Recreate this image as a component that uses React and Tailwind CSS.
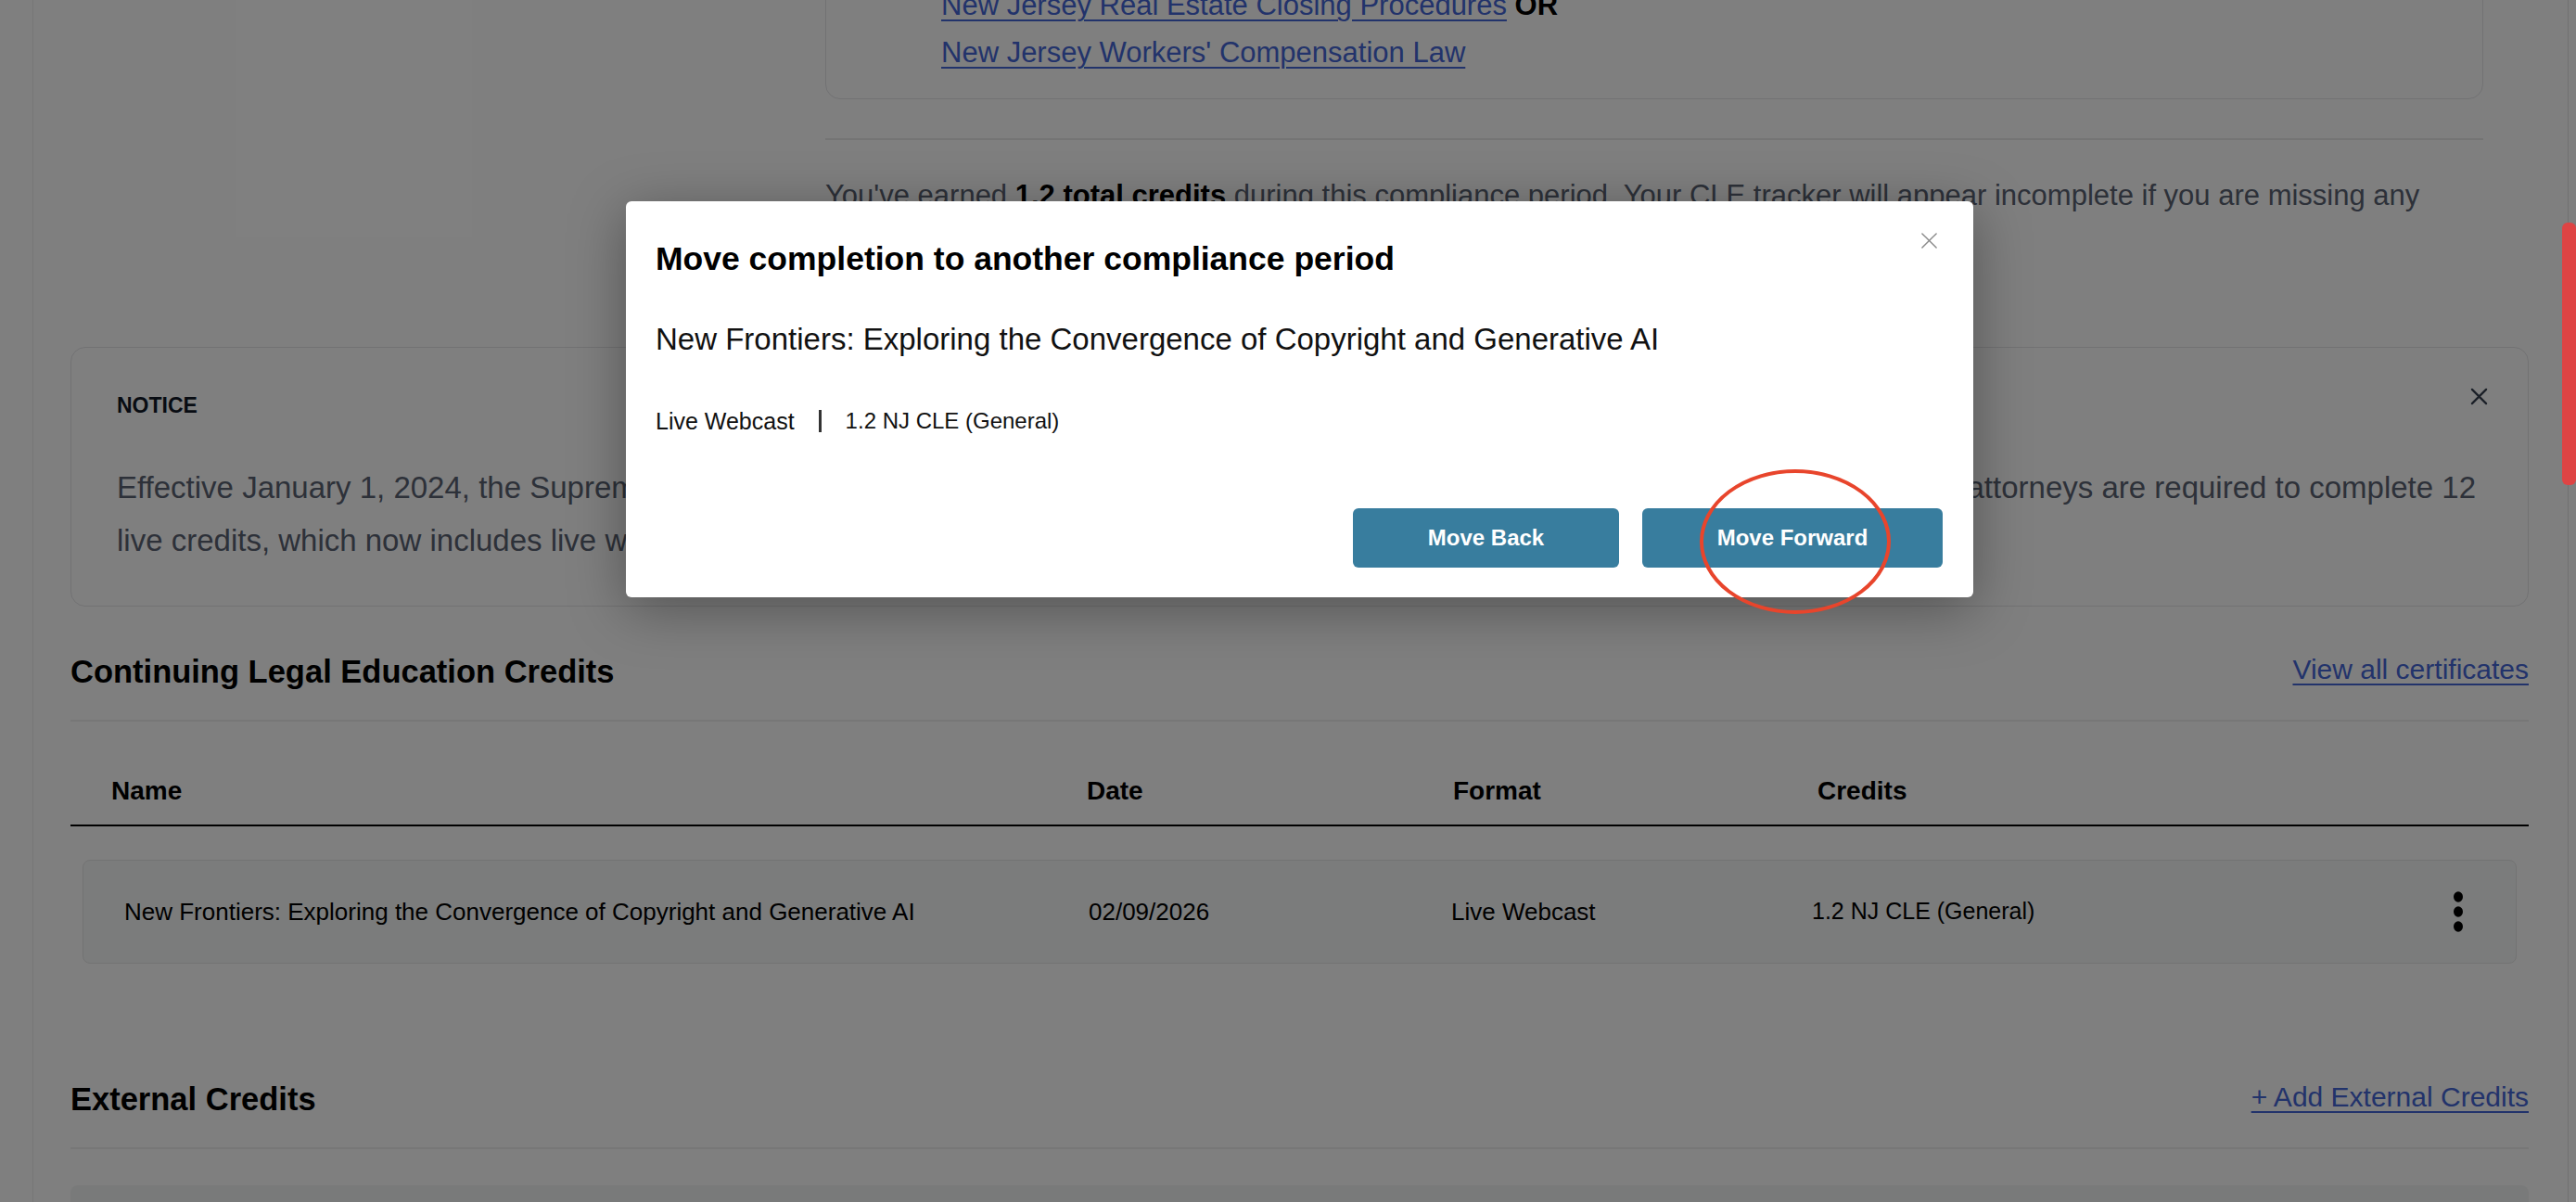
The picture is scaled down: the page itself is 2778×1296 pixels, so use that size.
import React from 'react';

const linkCls = 'text-[#4566d6] underline decoration-2 underline-offset-[5px]';

const XIcon = ({ className, strokeWidth = 2 }) => (
  <svg viewBox="0 0 20 20" className={className} fill="none" stroke="currentColor" strokeWidth={strokeWidth} strokeLinecap="round">
    <path d="M2 2L18 18M18 2L2 18" />
  </svg>
);

const Kebab = () => (
  <svg width="12" height="44" viewBox="0 0 12 44" fill="currentColor">
    <ellipse cx="6" cy="6" rx="5" ry="5.8" />
    <ellipse cx="6" cy="22" rx="5" ry="5.8" />
    <ellipse cx="6" cy="38" rx="5" ry="5.8" />
  </svg>
);

const SectionHead = ({ title, action }) => (
  <>
    <div className="flex items-start justify-between">
      <h2 className="text-[34.5px] leading-[40px] font-bold text-black">{title}</h2>
      <a href="#" className={`text-[30px] leading-[36px] ${linkCls}`}>{action}</a>
    </div>
    <div className="mt-[32px] h-[2px] bg-[#eeeeee]" />
  </>
);

export default function App() {
  return (
    <div className="relative h-[1296px] w-full overflow-hidden bg-white font-['Liberation_Sans',Arial,sans-serif]">
      <div className="flex h-full">
        <aside className="w-[36px] shrink-0 border-r border-[#ececec]" />

        <main className="-mt-[45px] flex-1 pl-[40px] pr-[42px]">
          {/* requirement details */}
          <div className="flex">
            <div className="w-[814px] shrink-0" />
            <div className="w-[1788px]">
              <div className="rounded-2xl border border-[#e4e4e7] pl-[124px] pt-[24px] pb-[24px] text-[31px] leading-[51px]">
                <p>
                  <a href="#" className={linkCls}>New Jersey Real Estate Closing Procedures</a>{' '}
                  <span className="font-bold text-black">OR</span>
                </p>
                <p>
                  <a href="#" className={linkCls}>New Jersey Workers' Compensation Law</a>
                </p>
              </div>
              <div className="mt-[42px] h-[2px] bg-[#e8e8e8]" />
              <p className="mt-[36px] text-[31px] leading-[48px] text-[#5a6272]">
                You've earned <b className="text-black">1.2 total credits</b> during this compliance period. Your CLE tracker will appear incomplete if you are missing any
                <br />
                required credit categories.
              </p>
            </div>
          </div>

          {/* notice */}
          <div className="relative mt-[91px] rounded-2xl border border-[#e4e4e7] pt-[47px] pr-[56px] pb-[42px] pl-[49px]">
            <p className="text-[23px] leading-[30px] font-bold text-[#111827]">NOTICE</p>
            <button className="absolute top-[43px] right-[43px] text-[#374151]">
              <XIcon className="h-[19px] w-[19px]" strokeWidth={2.4} />
            </button>
            <div className="mt-[45px] text-[33px] leading-[57px] text-[#5a6272]">
              <div className="flex justify-between gap-[12px] whitespace-nowrap">
                <span className="min-w-0 overflow-hidden">Effective January 1, 2024, the Supreme Court of New Jersey amended the continuing legal education rules, and all</span>
                <span className="shrink-0">attorneys are required to complete 12</span>
              </div>
              <div className="overflow-hidden whitespace-nowrap">live credits, which now includes live webcasts, during each two-year compliance period.</div>
            </div>
          </div>

          {/* CLE credits */}
          <div className="mt-[50px]">
            <SectionHead title="Continuing Legal Education Credits" action="View all certificates" />
            <div className="mt-[58px] grid grid-cols-[1052px_395px_393px_1fr] border-b-2 border-black pb-[19px] pl-[44px] text-[28px] leading-[34px] font-bold text-black">
              <span>Name</span>
              <span>Date</span>
              <span>Format</span>
              <span>Credits</span>
            </div>
            <div className="mx-[13px] mt-[36px] grid h-[112px] grid-cols-[1040px_391px_389px_1fr_auto] items-center rounded-lg border border-[#e6e6e6] bg-[#f6f8f8] pr-[56px] pl-[44px] text-[26px] text-black">
              <span>New Frontiers: Exploring the Convergence of Copyright and Generative AI</span>
              <span>02/09/2026</span>
              <span>Live Webcast</span>
              <span className="text-[25px]">1.2 NJ CLE (General)</span>
              <Kebab />
            </div>
          </div>

          {/* external credits */}
          <div className="mt-[126px]">
            <SectionHead title="External Credits" action="+ Add External Credits" />
            <div className="mt-[39px] h-[200px] rounded-lg bg-[#f3f4f4]" />
          </div>
        </main>

        <div className="w-[9px] shrink-0 border-l border-[#e2e2e2]" />
      </div>

      {/* backdrop */}
      <div className="absolute inset-0 bg-black/50" />

      {/* modal */}
      <div className="absolute top-[217px] left-[675px] w-[1453px] rounded-md bg-white pt-[41px] pr-[33px] pb-[32px] pl-[32px] shadow-[0_12px_60px_rgba(0,0,0,0.35)]">
        <button className="absolute top-[33px] right-[38px] text-[#8a8a8a]">
          <XIcon className="h-[19px] w-[19px]" strokeWidth={1.5} />
        </button>
        <h3 className="text-[35.5px] leading-[42px] font-bold text-black">Move completion to another compliance period</h3>
        <p className="mt-[46px] text-[33px] leading-[40px] text-[#111]">New Frontiers: Exploring the Convergence of Copyright and Generative AI</p>
        <div className="mt-[52px] flex items-center text-[25px] leading-[32px] text-[#111]">
          <span>Live Webcast</span>
          <span className="mx-[26px] h-[24px] w-[3px] bg-[#333]" />
          <span className="text-[24px]">1.2 NJ CLE (General)</span>
        </div>
        <div className="mt-[78px] flex justify-end gap-[25px]">
          <button className="h-[64px] w-[287px] rounded-md bg-[#387d9e] text-[24px] font-bold text-white">Move Back</button>
          <button className="h-[64px] w-[324px] rounded-md bg-[#387d9e] text-[24px] font-bold text-white">Move Forward</button>
        </div>
      </div>

      {/* annotation */}
      <svg className="absolute top-[505px] left-[1832px]" width="210" height="160" viewBox="0 0 210 160" fill="none">
        <ellipse cx="104" cy="79" rx="101" ry="76" stroke="#e8452c" strokeWidth="4" />
      </svg>

      {/* scrollbar thumb */}
      <div className="absolute top-[240px] right-0 h-[283px] w-[15px] rounded-[6px] bg-[#de4444]" />
    </div>
  );
}
